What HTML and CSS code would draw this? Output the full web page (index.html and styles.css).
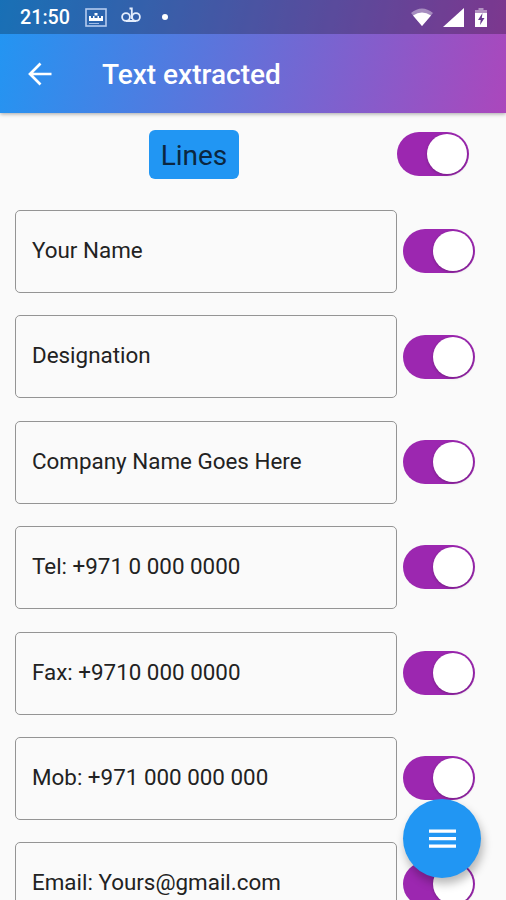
FILE: index.html
```html
<!DOCTYPE html>
<html lang="en">
<head>
<meta charset="utf-8">
<title>Text extracted</title>
<link rel="stylesheet" href="styles.css">
</head>
<body>
<div class="screen">
  <header class="header">
    <div class="status">
      <span class="time">21:50</span>
      <svg class="shot" width="22" height="19" viewBox="0 0 22 19" fill="none"><rect x="1" y="1" width="20" height="17" stroke="#b4cbef" stroke-width="1.6"/><path d="M4 13V8h2v2h2V8h1.500v2h3V8H14v2h2V8h2v5z" fill="#fff"/><path d="M9.500 5h3v2.500h-3z" fill="#fff"/><path d="M4 15.500h10" stroke="#9fbce8"/></svg>
      <svg class="voice" width="20" height="16" viewBox="0 0 20 16" fill="none" stroke="#e4edfc" stroke-width="1.800"><circle cx="5" cy="10" r="3.900"/><circle cx="15" cy="10" r="3.900"/><path d="M5 14h10M8.500 1.500h2.300V12"/></svg>
      <i class="dot"></i>
      <svg class="wifi" width="22" height="18" viewBox="0 0 22 18"><path d="M0 5Q11-4 22 5L11 18z" fill="#fff" opacity=".4"/><path d="M2 7.500Q11 1.500 20 7.500L11 18z" fill="#fff"/></svg>
      <svg class="signal" width="21" height="19" viewBox="0 0 21 19"><path d="M21 0v19H0z" fill="#fff"/></svg>
      <svg class="battery" width="12" height="19" viewBox="0 0 12 19"><path d="M3.500 0h5v2H12v4H0V2h3.500z" fill="#fff" opacity=".45"/><path d="M0 5h12v14H0z" fill="#fff"/><path d="M7.500 5L3 12h2.700L5 17l4.500-7H6.800z" fill="#69388f"/></svg>
    </div>
    <div class="appbar">
      <svg class="back" width="24" height="24" viewBox="0 0 24 24" fill="none" stroke="#fff" stroke-width="2.700"><path d="M23.500 12H2.500M12.500 1.500L2 12l10.500 10.500"/></svg>
      <h1 class="title">Text extracted</h1>
    </div>
  </header>
  <main class="content">
    <div class="top"><div class="badge">Lines</div><div class="toggle"></div></div>
    <div class="row"><div class="field">Your Name</div><div class="toggle"></div></div>
    <div class="row"><div class="field">Designation</div><div class="toggle"></div></div>
    <div class="row"><div class="field">Company Name Goes Here</div><div class="toggle"></div></div>
    <div class="row"><div class="field">Tel: +971 0 000 0000</div><div class="toggle"></div></div>
    <div class="row"><div class="field">Fax: +9710 000 0000</div><div class="toggle"></div></div>
    <div class="row"><div class="field">Mob: +971 000 000 000</div><div class="toggle"></div></div>
    <div class="row"><div class="field">Email: Yours@gmail.com</div><div class="toggle"></div></div>
  </main>
  <div class="fab"><svg width="27" height="20" viewBox="0 0 27 20"><path d="M0 .500h27v3.300H0zM0 8h27v3.300H0zM0 15.500h27v3.300H0z" fill="#fff"/></svg></div>
</div>
</body>
</html>
```
FILE: styles.css
```css
* { box-sizing: border-box; }
body { margin: 0; font-family: Roboto, sans-serif; background: #fafafa; }
.screen { position: relative; width: 506px; height: 900px; overflow: hidden; }
.header {
  height: 113px;
  background: linear-gradient(103deg, #2196f3, #ab47bc);
  box-shadow: 0 1px 4px rgba(0, 0, 0, .35);
  color: #fff;
}
.status {
  display: flex;
  height: 34px;
  padding: 0 19px 0 20px;
  background: rgba(0, 0, 0, .25);
}
.status svg { flex: none; }
.time { width: 65px; font-size: 19.7px; line-height: 36px; font-weight: 500; }
.shot { margin-top: 8px; }
.voice { margin: 7px 0 0 14px; }
.dot { width: 6px; height: 6px; margin: 14px 0 0 21px; border-radius: 50%; background: #fff; }
.wifi { margin: 8px 0 0 auto; }
.signal { margin: 8px 0 0 10px; }
.battery { margin: 8px 0 0 11px; }
.appbar { display: flex; align-items: center; height: 79px; padding-left: 28px; }
.title { margin: 2px 0 0 50px; font-size: 28px; font-weight: 500; line-height: 32px; }
.top { display: flex; height: 96.8px; padding: 17px 37px 0 149px; justify-content: space-between; }
.top .toggle { margin-top: 2px; }
.badge {
  width: 90px;
  height: 49px;
  border-radius: 6px;
  background: #2196f3;
  color: #0b2740;
  font-size: 28px;
  line-height: 51px;
  text-align: center;
}
.row { display: flex; height: 105.45px; padding-left: 15px; }
.field {
  width: 382px;
  height: 83px;
  padding-left: 16px;
  border: 1px solid #949494;
  border-radius: 5px;
  color: #222;
  font-size: 22.4px;
  line-height: 78px;
  white-space: nowrap;
}
.toggle {
  display: flex;
  justify-content: flex-end;
  width: 72px;
  height: 44px;
  padding: 2px;
  border-radius: 22px;
  background: #9c27b0;
}
.toggle::after {
  content: "";
  width: 40px;
  height: 40px;
  border-radius: 50%;
  background: #fff;
  box-shadow: 0 1px 3px rgba(0, 0, 0, .25);
}
.row .toggle { margin: 19.3px 0 0 5.5px; }
.fab {
  position: absolute;
  left: 403px;
  top: 799px;
  display: flex;
  align-items: center;
  justify-content: center;
  width: 78px;
  height: 79px;
  border-radius: 50%;
  background: #2196f3;
  box-shadow: 2px 6px 10px rgba(0, 0, 0, .28);
}
```
